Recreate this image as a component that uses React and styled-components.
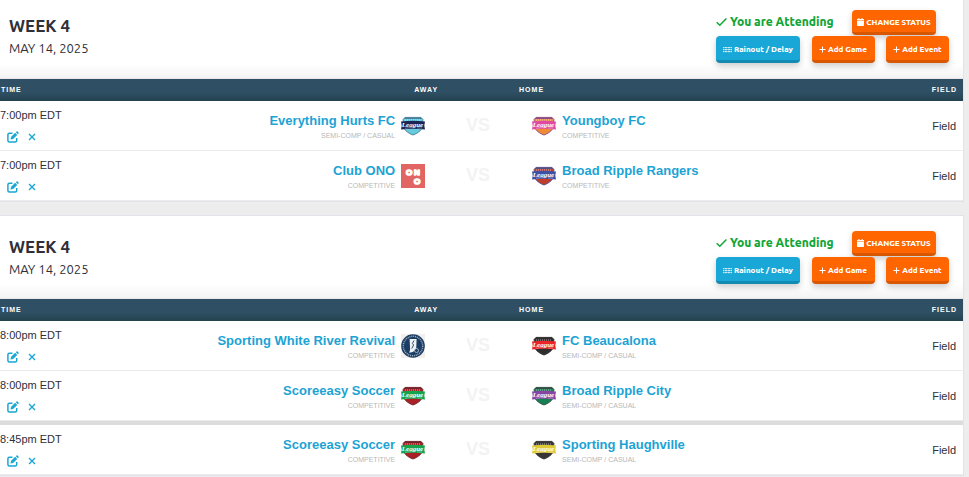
import React from "react";
import styled, { createGlobalStyle } from "styled-components";

const GlobalStyle = createGlobalStyle`
  *, *::before, *::after { box-sizing: border-box; }
  body {
    margin: 0;
    background: #ededed;
    color: #2f2f38;
    font-family: "Liberation Sans", Arial, sans-serif;
    font-size: 11px;
  }
`;

const Page = styled.main`
  display: flex;
  flex-direction: column;
  gap: 13px;
  padding-right: 5px;
`;

const Panel = styled.section`
  background: #fff;
  border: solid #e2e2e8;
  border-width: 1px 1px 1px 0;

  &:first-child { border-top: 0; }
`;

const PanelHeader = styled.header`
  display: flex;
  justify-content: space-between;
  align-items: flex-start;
  padding: ${(p) => (p.$first ? "10px 14px 15px 9px" : "15px 14px 14px 9px")};
  background: linear-gradient(to top, #f4f4f4, #fff 14px);
  border-bottom: 1px solid #e9e6ea;
  font-family: Ubuntu, "Noto Sans", sans-serif;
`;

const Titles = styled.div`
  padding-top: 5px;
`;

const Week = styled.h2`
  margin: 0;
  font-size: 17px;
  line-height: 22px;
  font-weight: 700;
`;

const Day = styled.p`
  margin: 0;
  font-size: 13px;
  line-height: 22px;
`;

const Actions = styled.div`
  display: flex;
  flex-direction: column;
  gap: 1px;
  width: 233px;
`;

const StatusRow = styled.div`
  display: flex;
  justify-content: space-between;
  padding-right: 13px;
`;

const ButtonRow = styled.div`
  display: flex;
  justify-content: space-between;
`;

const Attending = styled.span`
  display: flex;
  align-items: center;
  gap: 3px;
  height: 23px;
  color: #12a537;
  font-size: 12px;
  font-weight: 800;
  white-space: nowrap;
`;

const tones = {
  orange: ["#ff6600", "#d95700"],
  blue: ["#18a7d6", "#128bb3"],
};

const Button = styled.button`
  display: inline-flex;
  align-items: center;
  justify-content: center;
  gap: 2px;
  min-width: ${(p) => (p.$wide ? "84px" : "63px")};
  height: ${(p) => (p.$short ? "25px" : "27px")};
  padding: 2px 5px 0;
  border: 0;
  border-bottom: 3px solid ${(p) => tones[p.$tone][1]};
  border-radius: 4px;
  background: ${(p) => tones[p.$tone][0]};
  box-shadow: 0 3px 6px rgba(0, 0, 0, 0.2);
  color: #fff;
  font-family: Ubuntu, "Noto Sans", sans-serif;
  font-size: 8px;
  font-weight: 800;
  white-space: nowrap;
  cursor: pointer;
`;

const Table = styled.table`
  width: 100%;
  table-layout: fixed;
  border-collapse: separate;
  border-spacing: 0;
`;

const Col = styled.col`
  width: ${(p) => p.$w};
`;

const Th = styled.th`
  height: 22px;
  padding: 0 ${(p) => (p.$align === "right" ? "6px" : "0")} 1px 1px;
  background: linear-gradient(to bottom, #2f5064 60%, #23424f);
  color: #fff;
  font-size: 7px;
  letter-spacing: 1px;
  text-align: ${(p) => (p.$align ? "right" : "left")};
`;

const Row = styled.tr`
  & > td {
    height: ${(p) => (p.$split ? "54px" : "50px")};
    border-top: ${(p) => (p.$split ? "4px solid #dcdcdc" : "0")};
    border-bottom: 1px solid #ececee;
  }
`;

const Td = styled.td`
  padding: 0;
`;

const FieldTd = styled(Td)`
  padding-right: 7px;
  text-align: right;
`;

const Time = styled.div`
  line-height: 15px;
`;

const Tools = styled.div`
  display: flex;
  align-items: center;
  gap: 6px;
  padding: 7px 0 0 6px;
`;

const IconButton = styled.button`
  display: grid;
  place-items: center;
  width: 13px;
  height: 14px;
  padding: 0;
  border: 0;
  background: none;
  color: #1ba6d3;
  cursor: pointer;
`;

const Team = styled.div`
  display: flex;
  flex-direction: ${(p) => (p.$home ? "row-reverse" : "row")};
  justify-content: flex-end;
  align-items: center;
  gap: 6px;
  padding: 0 ${(p) => (p.$home ? "0 0 14px" : "13px 0 0")};
  text-align: ${(p) => (p.$home ? "left" : "right")};
`;

const TeamText = styled.div`
  padding-top: 3px;
`;

const TeamLink = styled.a`
  display: block;
  color: #1ca3d4;
  font-size: 13px;
  line-height: 17px;
  font-weight: 700;
  text-decoration: none;
  white-space: nowrap;
`;

const Division = styled.div`
  color: #b8b8b8;
  font-size: 7px;
  line-height: 13px;
`;

const Versus = styled.div`
  padding-bottom: 2px;
  color: #f3f3f3;
  font-size: 18px;
  line-height: 20px;
  font-weight: 700;
  text-align: center;
`;

const Logo = styled.svg`
  display: block;
  flex: none;
  width: 24px;
  height: 24px;
`;

const CheckIcon = () => (
  <svg width="11" height="10" viewBox="0 0 11 10" fill="none" stroke="currentColor" strokeWidth="1.5" aria-hidden="true">
    <path d="M.7 5.2 3.8 8.3 10.4 1.4" />
  </svg>
);

const CalendarIcon = () => (
  <svg width="7" height="8" viewBox="0 0 7 8" fill="currentColor" aria-hidden="true">
    <path d="M1.4 0h1v1h2.2V0h1v1H7v1.2H0V1h1.4zM0 2.8h7v4.4a.8.8 0 0 1-.8.8H.8a.8.8 0 0 1-.8-.8z" />
  </svg>
);

const PlusIcon = () => (
  <svg width="7" height="7" viewBox="0 0 7 7" fill="none" stroke="currentColor" aria-hidden="true">
    <path d="M3.5.5v6M.5 3.5h6" />
  </svg>
);

const WaterIcon = () => (
  <svg width="9" height="7" viewBox="0 0 9 7" fill="none" stroke="currentColor" strokeWidth=".9" aria-hidden="true">
    {[1, 3, 5].map((y) => (
      <path key={y} d={`M0 ${y}.8q1.1 0 1.5-.8 .4 .8 1.5 .8 1.1 0 1.5-.8 .4 .8 1.5 .8 1.1 0 1.5-.8 .4 .8 1.5 .8`} />
    ))}
  </svg>
);

const EditIcon = () => (
  <svg width="12" height="12" viewBox="0 0 12 12" fill="none" stroke="currentColor" aria-hidden="true">
    <path d="M5.5 2.2H2.4A1.5 1.5 0 0 0 .9 3.7v5.8A1.5 1.5 0 0 0 2.4 11h5.8a1.5 1.5 0 0 0 1.5-1.5V7" strokeWidth="1.5" />
    <path d="m3.500 8.500.5-2.600L8.100 1.800l2.100 2.100L6.100 8zM8.800 1.200l.7-.7q.6-.5 1.100 0l.9.9q.5.500 0 1.100l-.7.7z" fill="currentColor" stroke="none" />
  </svg>
);

const CrossIcon = () => (
  <svg width="8" height="8" viewBox="0 0 8 8" fill="none" stroke="currentColor" strokeWidth="1.4" aria-hidden="true">
    <path d="m1 1 6 6M7 1 1 7" />
  </svg>
);

const Shield = ({ field, banner, edge }) => (
  <Logo viewBox="0 0 24 24" aria-hidden="true">
    <path d="M4 3.4h16l2 2.2q-.8 2 0 4.4c.2 5.4-4.600 9-10 11C6.600 19 1.800 15.400 2 10q.8-2.400 0-4.400z" fill={field} stroke={edge} strokeWidth=".9" />
    <path d="M4 3.500h16l1.200 1.400H2.800z" fill={edge} />
    <path d="M4 6h16" stroke="#fff" strokeOpacity=".6" strokeDasharray="1 1" />
    <path d="M0 7.600q12-1.600 24 0l-.7 3.900.7 4q-12-1.400-24 0l.7-4z" fill={banner} />
    <text x="11.500" y="13" textAnchor="middle" fill="#fff" fontFamily="Liberation Serif, serif" fontStyle="italic" fontWeight="700" fontSize="7">League</text>
    <path d="M4 14.300q5-1 9-.6M16 14h5" fill="none" stroke="#fff" strokeOpacity=".6" strokeWidth=".6" />
  </Logo>
);

const OnoLogo = () => (
  <Logo viewBox="0 0 24 24" aria-hidden="true">
    <path d="M0 0h24v24H0z" fill="#e16663" />
    <g fill="#fff" stroke="#fff" strokeWidth="1.500" strokeLinejoin="round" fontFamily="Liberation Sans, sans-serif" fontWeight="700" fontSize="8" textAnchor="middle">
      <text x="8" y="11">O</text>
      <text x="16" y="11">N</text>
      <text x="16" y="20">O</text>
    </g>
  </Logo>
);

const RiverLogo = () => (
  <Logo viewBox="0 0 24 24" aria-hidden="true">
    <path d="M0 0h24v24H0z" fill="#f3efec" />
    <circle cx="12" cy="12" r="11.800" fill="#1c3d63" />
    <circle cx="12" cy="12" r="9.700" fill="none" stroke="#9fb0c2" strokeWidth="1.500" strokeDasharray="1 .9" />
    <circle cx="12" cy="12" r="7.600" fill="#1c3d63" />
    <path d="M8.600 5h7l-.4 10-1.800 1.500-1.500 1.500-3.600.8.8-3.500z" fill="#eef1f4" />
    <path d="m13 6.500-1.600 3 1.200 1.500-1.800 3.500" fill="none" stroke="#1c3d63" strokeWidth=".9" />
    <circle cx="15.500" cy="16.500" r="2" fill="#1c3d63" stroke="#d5dde5" strokeWidth=".7" />
  </Logo>
);

const logos = {
  sky: <Shield field="#66cbdc" banner="#1c2455" edge="#4b7d98" />,
  pink: <Shield field="#f08b35" banner="#df4aa3" edge="#8c4a86" />,
  royal: <Shield field="#c23c2c" banner="#3c51a5" edge="#51528a" />,
  red: <Shield field="#302d2e" banner="#ea2428" edge="#302d2e" />,
  green: <Shield field="#ab2027" banner="#16a34d" edge="#70252c" />,
  purple: <Shield field="#168052" banner="#8646a4" edge="#314d43" />,
  gold: <Shield field="#383536" banner="#dfca37" edge="#383536" />,
  ono: <OnoLogo />,
  river: <RiverLogo />,
};

const COMP = "COMPETITIVE";
const SEMI = "SEMI-COMP / CASUAL";

const weeks = [
  [
    { time: "7:00pm EDT", away: ["Everything Hurts FC", SEMI, "sky"], home: ["Youngboy FC", COMP, "pink"] },
    { time: "7:00pm EDT", away: ["Club ONO", COMP, "ono"], home: ["Broad Ripple Rangers", COMP, "royal"] },
  ],
  [
    { time: "8:00pm EDT", away: ["Sporting White River Revival", COMP, "river"], home: ["FC Beaucalona", SEMI, "red"] },
    { time: "8:00pm EDT", away: ["Scoreeasy Soccer", COMP, "green"], home: ["Broad Ripple City", SEMI, "purple"] },
    { time: "8:45pm EDT", split: true, away: ["Scoreeasy Soccer", COMP, "green"], home: ["Sporting Haughville", SEMI, "gold"] },
  ],
];

const TeamCell = ({ team: [name, division, logo], home }) => (
  <Team $home={home}>
    <TeamText>
      <TeamLink href="#team">{name}</TeamLink>
      <Division>{division}</Division>
    </TeamText>
    {logos[logo]}
  </Team>
);

const Game = ({ game }) => (
  <Row $split={game.split}>
    <Td>
      <Time>{game.time}</Time>
      <Tools>
        <IconButton type="button" aria-label="Edit game"><EditIcon /></IconButton>
        <IconButton type="button" aria-label="Remove game"><CrossIcon /></IconButton>
      </Tools>
    </Td>
    <Td><TeamCell team={game.away} /></Td>
    <Td><Versus>VS</Versus></Td>
    <Td><TeamCell team={game.home} home /></Td>
    <FieldTd>Field</FieldTd>
  </Row>
);

const WeekPanel = ({ games, first }) => (
  <Panel>
    <PanelHeader $first={first}>
      <Titles>
        <Week>WEEK 4</Week>
        <Day>MAY 14, 2025</Day>
      </Titles>
      <Actions>
        <StatusRow>
          <Attending><CheckIcon />You are Attending</Attending>
          <Button type="button" $tone="orange" $wide $short><CalendarIcon />CHANGE STATUS</Button>
        </StatusRow>
        <ButtonRow>
          <Button type="button" $tone="blue" $wide><WaterIcon />Rainout / Delay</Button>
          <Button type="button" $tone="orange"><PlusIcon />Add Game</Button>
          <Button type="button" $tone="orange"><PlusIcon />Add Event</Button>
        </ButtonRow>
      </Actions>
    </PanelHeader>
    <Table>
      <colgroup>
        <Col $w="12%" />
        <Col $w="33.5%" />
        <Col $w="8.3%" />
        <Col />
        <Col $w="10%" />
      </colgroup>
      <thead>
        <tr>
          <Th scope="col">TIME</Th>
          <Th scope="col" $align="edge">AWAY</Th>
          <Th aria-hidden="true" />
          <Th scope="col">HOME</Th>
          <Th scope="col" $align="right">FIELD</Th>
        </tr>
      </thead>
      <tbody>
        {games.map((game, i) => <Game key={i} game={game} />)}
      </tbody>
    </Table>
  </Panel>
);

export default function App() {
  return (
    <>
      <GlobalStyle />
      <Page>
        {weeks.map((games, i) => <WeekPanel key={i} games={games} first={i === 0} />)}
      </Page>
    </>
  );
}
